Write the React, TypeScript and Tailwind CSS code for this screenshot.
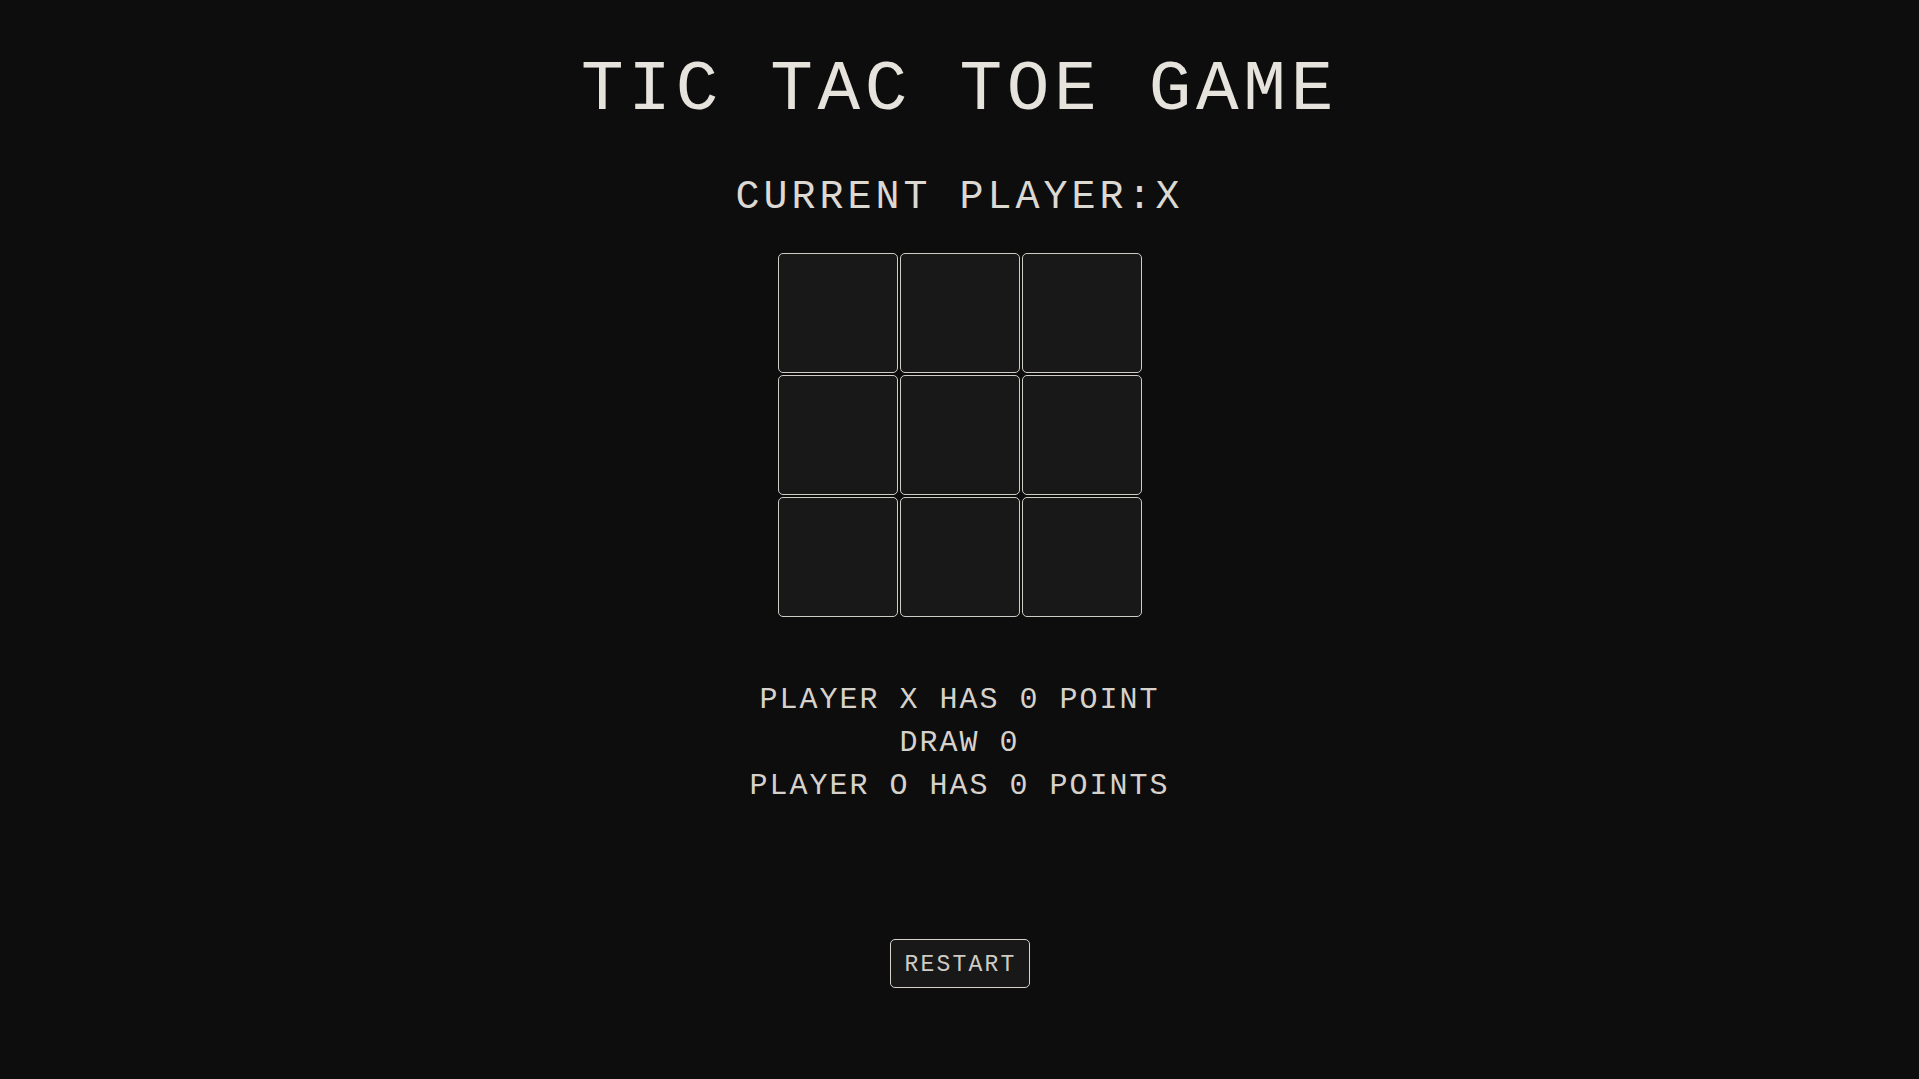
const cells = Array.from({ length: 9 }, (_, i) => i)

const mono = "font-['Liberation_Mono','DejaVu_Sans_Mono',monospace]"

export default function App() {
  return (
    <div className={`flex min-h-screen flex-col items-center bg-[#0d0d0d] ${mono}`}>
      <h1 className="mt-[55px] text-[71px] leading-[71px] font-normal tracking-[4.7px] text-[#e6e2dc]">
        TIC TAC TOE GAME
      </h1>

      <h2 className="mt-[52px] text-[40px] leading-[40px] font-normal tracking-[4px] text-[#dcd8d2]">
        CURRENT PLAYER:X
      </h2>

      <div className="mt-[35px] grid grid-cols-[repeat(3,120px)] gap-[2px]">
        {cells.map((c) => (
          <button
            key={c}
            className="h-[120px] w-[120px] rounded-[5px] border border-[#cfcbc5] bg-[#181818]"
          />
        ))}
      </div>

      <div className="mt-[62px] flex flex-col items-center text-[30px] leading-[43px] tracking-[2px] text-[#d6d2cb]">
        <p>PLAYER X HAS 0 POINT</p>
        <p>DRAW 0</p>
        <p>PLAYER O HAS 0 POINTS</p>
      </div>

      <button className="mt-[131px] flex h-[49px] w-[140px] items-center justify-center rounded-[5px] border border-[#d6d2cb] bg-[#181818] pt-[4px] pl-[2px] text-[23px] leading-none tracking-[2.2px] text-[#cfcbc5]">
        RESTART
      </button>
    </div>
  )
}
